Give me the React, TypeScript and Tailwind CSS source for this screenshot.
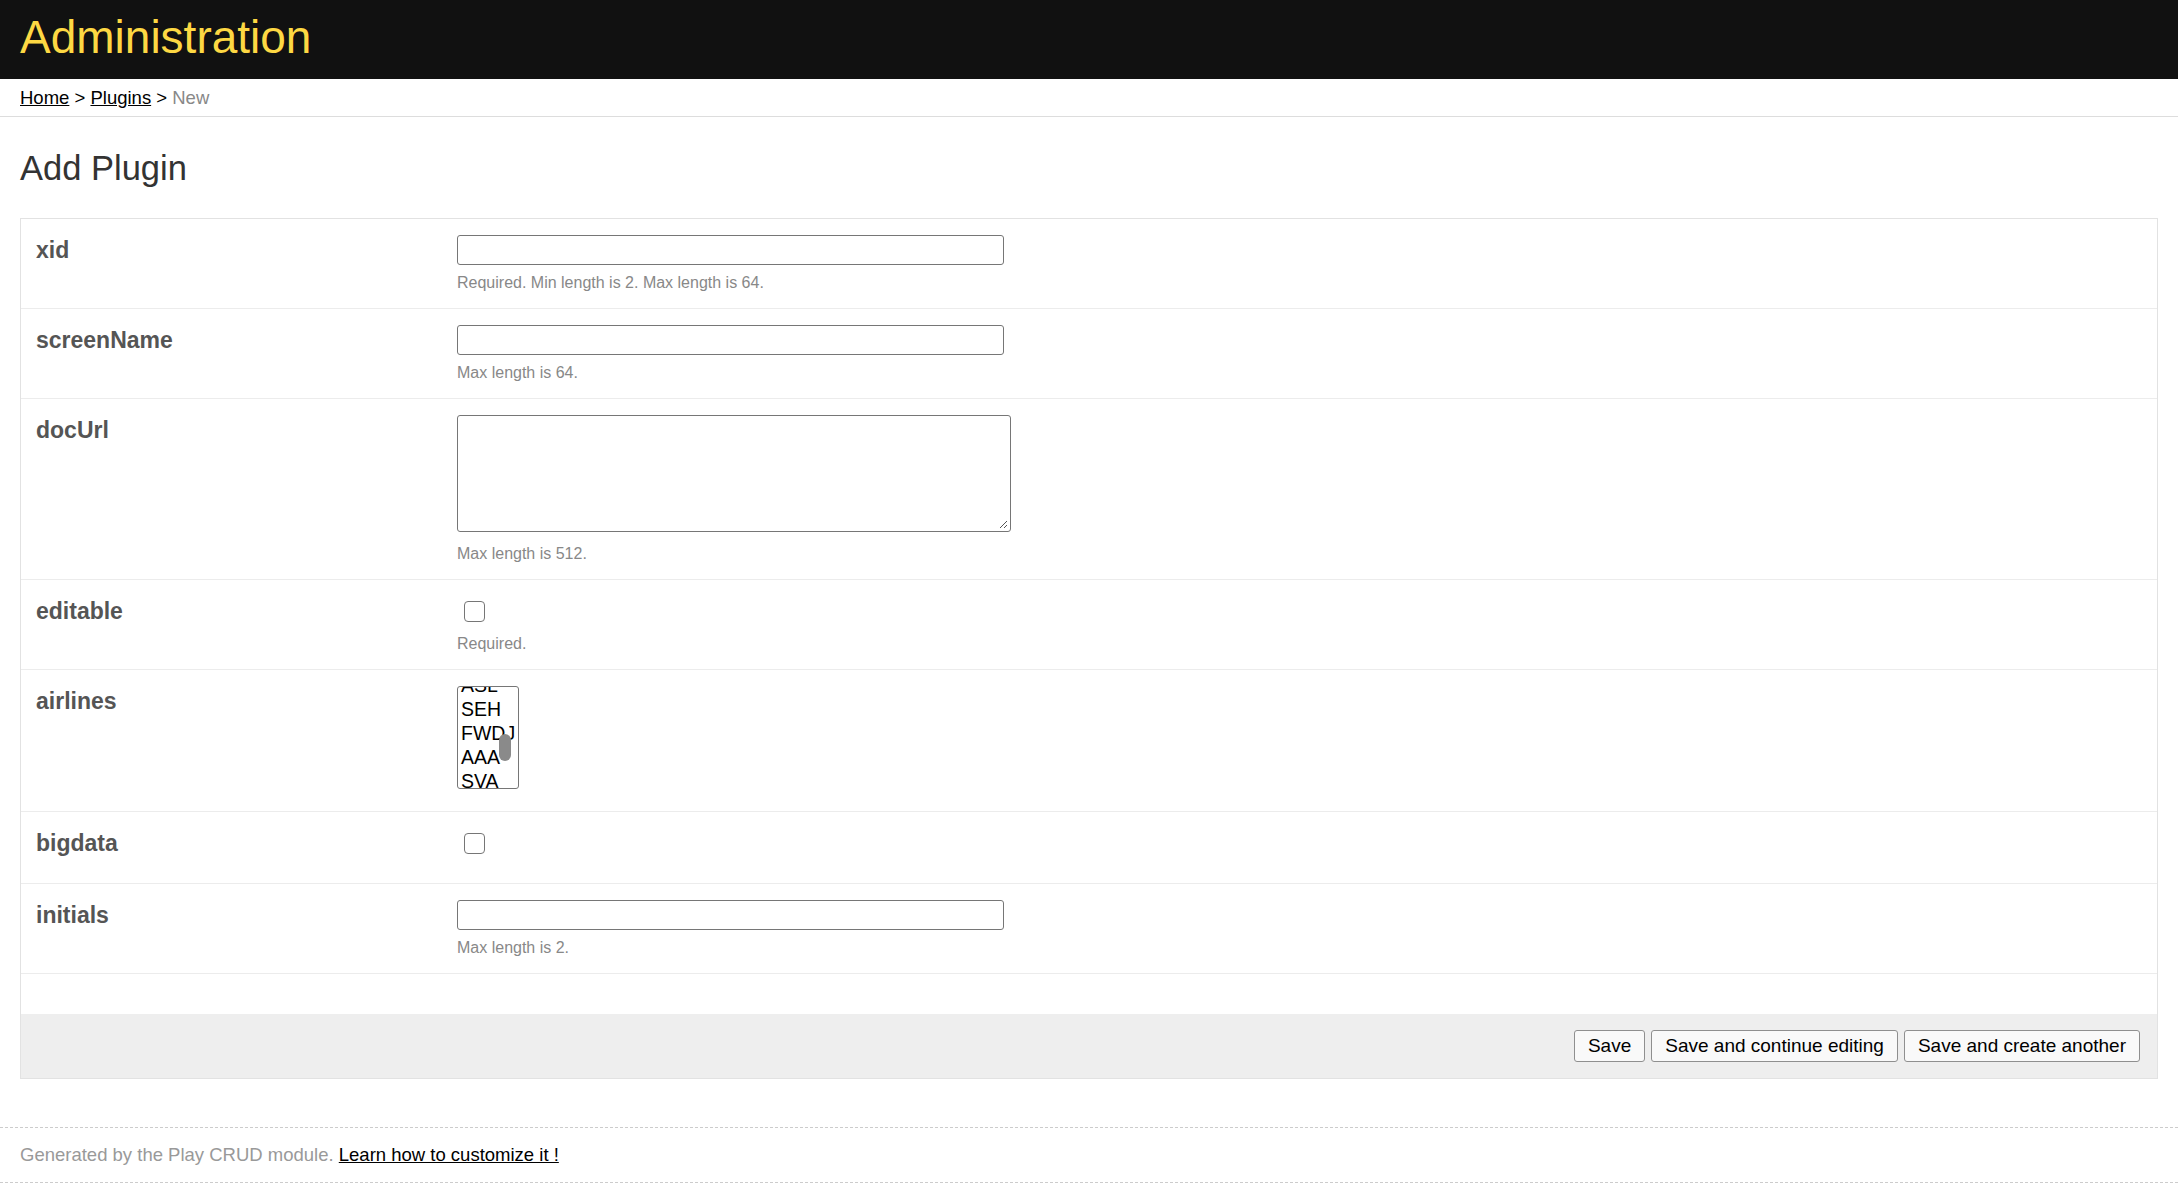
import React from "react";

const Row = ({ label, children }: { label: string; children: React.ReactNode }) => (
  <div className="flex border-b border-[#ececec]">
    <div className="w-[436px] shrink-0 pl-[15px] pt-[16px] text-[23px] leading-[30px] font-bold text-[#555]">
      {label}
    </div>
    <div className="flex-1 py-[16px]">{children}</div>
  </div>
);

const Help = ({ children }: { children: React.ReactNode }) => (
  <div className="mt-[8px] text-[16px] leading-[19px] text-[#888]">{children}</div>
);

const TextInput = () => (
  <div className="h-[30px] w-[547px] rounded-[3px] border border-[#767676] bg-white" />
);

const Box = () => (
  <div className="h-[21px] w-[21px] rounded-[4px] border-[1.5px] border-[#767676] bg-white" />
);

export default function App() {
  return (
    <div className="min-h-screen bg-white font-['Liberation_Sans',Arial,sans-serif] text-black">
      <header className="flex h-[79px] items-center bg-[#111111] px-[20px] pb-[5px]">
        <h1 className="text-[46px] leading-none text-[#fdd843]">Administration</h1>
      </header>
      <div className="flex h-[38px] items-center border-b border-[#dddddd] px-[20px] pt-[1px] text-[18.5px]">
        <a className="underline">Home</a>
        <span>&nbsp;&gt;&nbsp;</span>
        <a className="underline">Plugins</a>
        <span>&nbsp;&gt;&nbsp;</span>
        <span className="text-[#888]">New</span>
      </div>
      <main className="px-[20px]">
        <h2 className="mt-[31px] mb-[30px] text-[34.5px] leading-[40px] text-[#333]">Add Plugin</h2>
        <div className="border border-[#e2e2e2]">
          <Row label="xid">
            <TextInput />
            <Help>Required. Min length is 2. Max length is 64.</Help>
          </Row>
          <Row label="screenName">
            <TextInput />
            <Help>Max length is 64.</Help>
          </Row>
          <Row label="docUrl">
            <div className="relative h-[117px] w-[554px] rounded-[3px] border border-[#767676] bg-white">
              <svg className="absolute bottom-[2px] right-[2px]" width="10" height="10" viewBox="0 0 10 10">
                <path d="M9 2 L2 9 M9 6 L6 9" stroke="#555" strokeWidth="1" />
              </svg>
            </div>
            <div className="h-[4px]" />
            <Help>Max length is 512.</Help>
          </Row>
          <Row label="editable">
            <div className="h-[30px] pl-[7px] pt-[5px]">
              <Box />
            </div>
            <Help>Required.</Help>
          </Row>
          <Row label="airlines">
            <div className="relative h-[103px] w-[62px] overflow-hidden rounded-[3px] border border-[#767676] bg-white">
              <div className="-mt-[14px] pl-[3px] text-[19.5px] leading-[24px] text-black">
                <div>ASL</div>
                <div>SEH</div>
                <div>FWDJ</div>
                <div>AAA</div>
                <div>SVA</div>
                <div>BOX</div>
              </div>
              <div className="absolute left-[41px] top-[47px] h-[27px] w-[12px] rounded-full bg-[#8a8a8a]" />
            </div>
            <div className="h-[6px]" />
          </Row>
          <Row label="bigdata">
            <div className="h-[39px] pl-[7px] pt-[5px]">
              <Box />
            </div>
          </Row>
          <Row label="initials">
            <TextInput />
            <Help>Max length is 2.</Help>
          </Row>
          <div className="h-[40px]" />
          <div className="flex h-[64px] items-center justify-end gap-[6px] bg-[#eeeeee] pr-[17px]">
            <button className="h-[32px] rounded-[3px] border border-[#8f8f8f] bg-[#f9f9f9] px-[13px] text-[19px] text-black">
              Save
            </button>
            <button className="h-[32px] rounded-[3px] border border-[#8f8f8f] bg-[#f9f9f9] px-[13px] text-[19px] text-black">
              Save and continue editing
            </button>
            <button className="h-[32px] rounded-[3px] border border-[#8f8f8f] bg-[#f9f9f9] px-[13px] text-[19px] text-black">
              Save and create another
            </button>
          </div>
        </div>
      </main>
      <footer className="mt-[48px] border-y border-dashed border-[#cccccc]">
        <div className="flex h-[54px] items-center px-[20px] text-[18.5px] text-[#999]">
          <span>Generated by the Play CRUD module.&nbsp;</span>
          <a className="text-black underline">Learn how to customize it !</a>
        </div>
      </footer>
    </div>
  );
}
